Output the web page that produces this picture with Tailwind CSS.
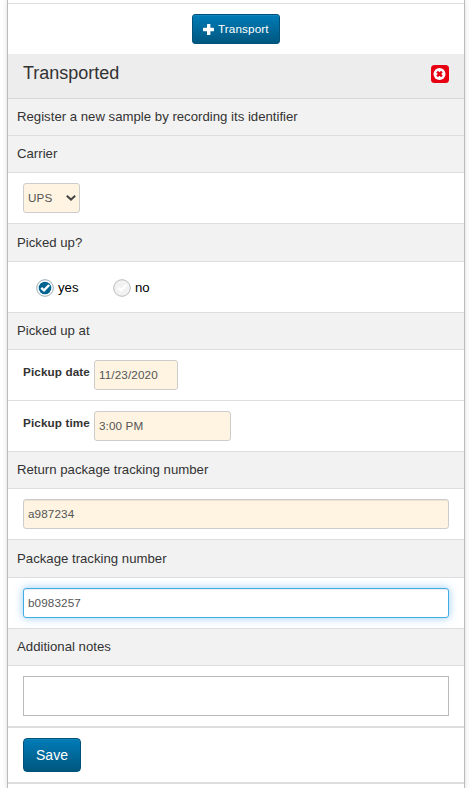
<!DOCTYPE html>
<html lang="en">
<head>
<meta charset="utf-8">
<title>Transport</title>
<script src="https://cdn.jsdelivr.net/npm/@tailwindcss/browser@4"></script>
</head>
<body class="h-[788px] overflow-hidden bg-white text-[13.2px] leading-5 text-[#333] [font-family:'Liberation_Sans',Arial,sans-serif]">
<main class="ml-[7px] h-[788px] w-[458px] border-x border-[#bbb] shadow-[0_0_5px_rgba(0,0,0,0.15)]">
  <div class="h-1 border-b border-[#ddd]"></div>
  <div class="flex h-[50px] justify-center pt-[10px]">
    <button class="flex h-[30px] w-[88px] items-center rounded-[3px] border border-[#00527a] bg-linear-to-b from-[#007cb8] to-[#00577f] pl-[10px] text-[11.7px] tracking-[0.12px] text-white shadow-[inset_0_1px_0_rgba(255,255,255,0.08)]">
      <svg class="mr-1 size-[11px] shrink-0" viewBox="0 0 11 11" fill="#fff"><rect x="4" width="3.4" height="11" rx=".6"/><rect y="3.8" width="11" height="3.4" rx=".6"/></svg>Transport</button>
  </div>
  <div class="flex h-[45px] justify-between border-b border-[#d9d9d9] bg-[#ededed] pr-[15px] pl-[15px]">
    <h1 class="pt-[7px] text-[18px] leading-6">Transported</h1>
    <svg class="mt-[11px] size-[18px]" viewBox="0 0 18 18"><rect width="18" height="18" rx="3.5" fill="#e60012"/><circle cx="8.5" cy="9" r="6" fill="#fff"/><path d="M6.1 6.6l4.8 4.8M10.9 6.6l-4.8 4.8" stroke="#e60012" stroke-width="2.4"/></svg>
  </div>
  <div class="h-[37px] border-b border-[#ddd] bg-[#f2f2f2] pt-2 pl-[9px]">Register a new sample by recording its identifier</div>
  <div class="h-[37px] border-b border-[#ddd] bg-[#f2f2f2] pt-2 pl-[9px]">Carrier</div>
  <div class="h-[51px] border-b border-[#ddd] px-[15px] pt-[10px]">
    <div class="flex h-[30px] w-[57px] items-center justify-between rounded-[3px] border border-[#ccc] bg-[#fef4e1] pr-[3px] pl-1 text-[11.7px] tracking-[0.12px] text-[#555]">UPS
      <svg class="h-[6px] w-[10px]" viewBox="0 0 10 6" fill="none" stroke="#444" stroke-width="2"><path d="M.8 .8L5 4.6L9.2 .8"/></svg>
    </div>
  </div>
  <div class="h-[38px] border-b border-[#ddd] bg-[#f2f2f2] pt-[9px] pl-[9px]">Picked up?</div>
  <div class="flex h-[51px] items-center border-b border-[#ddd] pt-[2px] pl-[28px] text-black">
    <label class="flex w-[77px] items-center"><svg class="mr-1 size-[18px]" viewBox="0 0 18 18"><circle cx="9" cy="9" r="8.3" fill="#fff" stroke="#9aabb5"/><circle cx="9" cy="9" r="6.3" fill="#006390"/><path d="M5.2 8.8l2.8 2.6L13.2 6" fill="none" stroke="#fff" stroke-width="2.4"/></svg>yes</label>
    <label class="flex items-center"><svg class="mr-1 size-[18px]" viewBox="0 0 18 18"><circle cx="9" cy="9" r="8.3" fill="#f2f2f2" stroke="#bbb"/><path d="M5.2 8.8l2.8 2.6L13.2 6" fill="none" stroke="#fff" stroke-width="2.2"/></svg>no</label>
  </div>
  <div class="h-[37px] border-b border-[#ddd] bg-[#f2f2f2] pt-2 pl-[9px]">Picked up at</div>
  <div class="flex h-[51px] border-b border-[#ddd] pt-[10px] pl-[15px]">
    <label class="w-[71px] pt-[2px] text-[11.7px] font-bold tracking-[0.12px] whitespace-nowrap">Pickup date</label>
    <div class="flex h-[30px] w-[84px] items-center rounded-[3px] border border-[#ccc] bg-[#fef4e1] pl-1 text-[11.7px] tracking-[0.12px] text-[#555]">11/23/2020</div>
  </div>
  <div class="flex h-[51px] border-b border-[#ddd] pt-[10px] pl-[15px]">
    <label class="w-[71px] pt-[2px] text-[11.7px] font-bold tracking-[0.12px] whitespace-nowrap">Pickup time</label>
    <div class="flex h-[30px] w-[137px] items-center rounded-[3px] border border-[#ccc] bg-[#fef4e1] pl-1 text-[11.7px] tracking-[0.12px] text-[#555]">3:00 PM</div>
  </div>
  <div class="h-[37px] border-b border-[#ddd] bg-[#f2f2f2] pt-2 pl-[9px]">Return package tracking number</div>
  <div class="h-[51px] border-b border-[#ddd] px-[15px] pt-[10px]">
    <div class="flex h-[30px] items-center rounded-[3px] border border-[#ccc] bg-[#fef4e1] pl-1 text-[11.7px] tracking-[0.12px] text-[#555] shadow-[inset_0_1px_1px_rgba(0,0,0,0.075)]">a987234</div>
  </div>
  <div class="h-[38px] border-b border-[#ddd] bg-[#f2f2f2] pt-[9px] pl-[9px]">Package tracking number</div>
  <div class="h-[51px] border-b border-[#ddd] px-[15px] pt-[10px]">
    <div class="flex h-[30px] items-center rounded-[3px] border border-[#41ade5] bg-white pl-1 text-[11.7px] tracking-[0.12px] text-[#555] shadow-[inset_0_1px_1px_rgba(0,0,0,0.075),0_0_8px_rgba(82,168,236,0.6)]">b0983257</div>
  </div>
  <div class="h-[37px] border-b border-[#ddd] bg-[#f2f2f2] pt-2 pl-[9px]">Additional notes</div>
  <div class="h-[62px] border-b-2 border-[#ddd] px-[15px] pt-[10px]">
    <textarea class="block h-10 w-full resize-none border border-[#bbb]"></textarea>
  </div>
  <div class="h-[56px] border-b-2 border-[#ddd] pt-[10px] pl-[15px]">
    <button class="block h-[34px] w-[58px] rounded-[4px] border border-[#00527a] bg-linear-to-b from-[#007cb8] to-[#00577f] text-[14px] text-white shadow-[inset_0_1px_0_rgba(255,255,255,0.08)]">Save</button>
  </div>
</main>
</body>
</html>
